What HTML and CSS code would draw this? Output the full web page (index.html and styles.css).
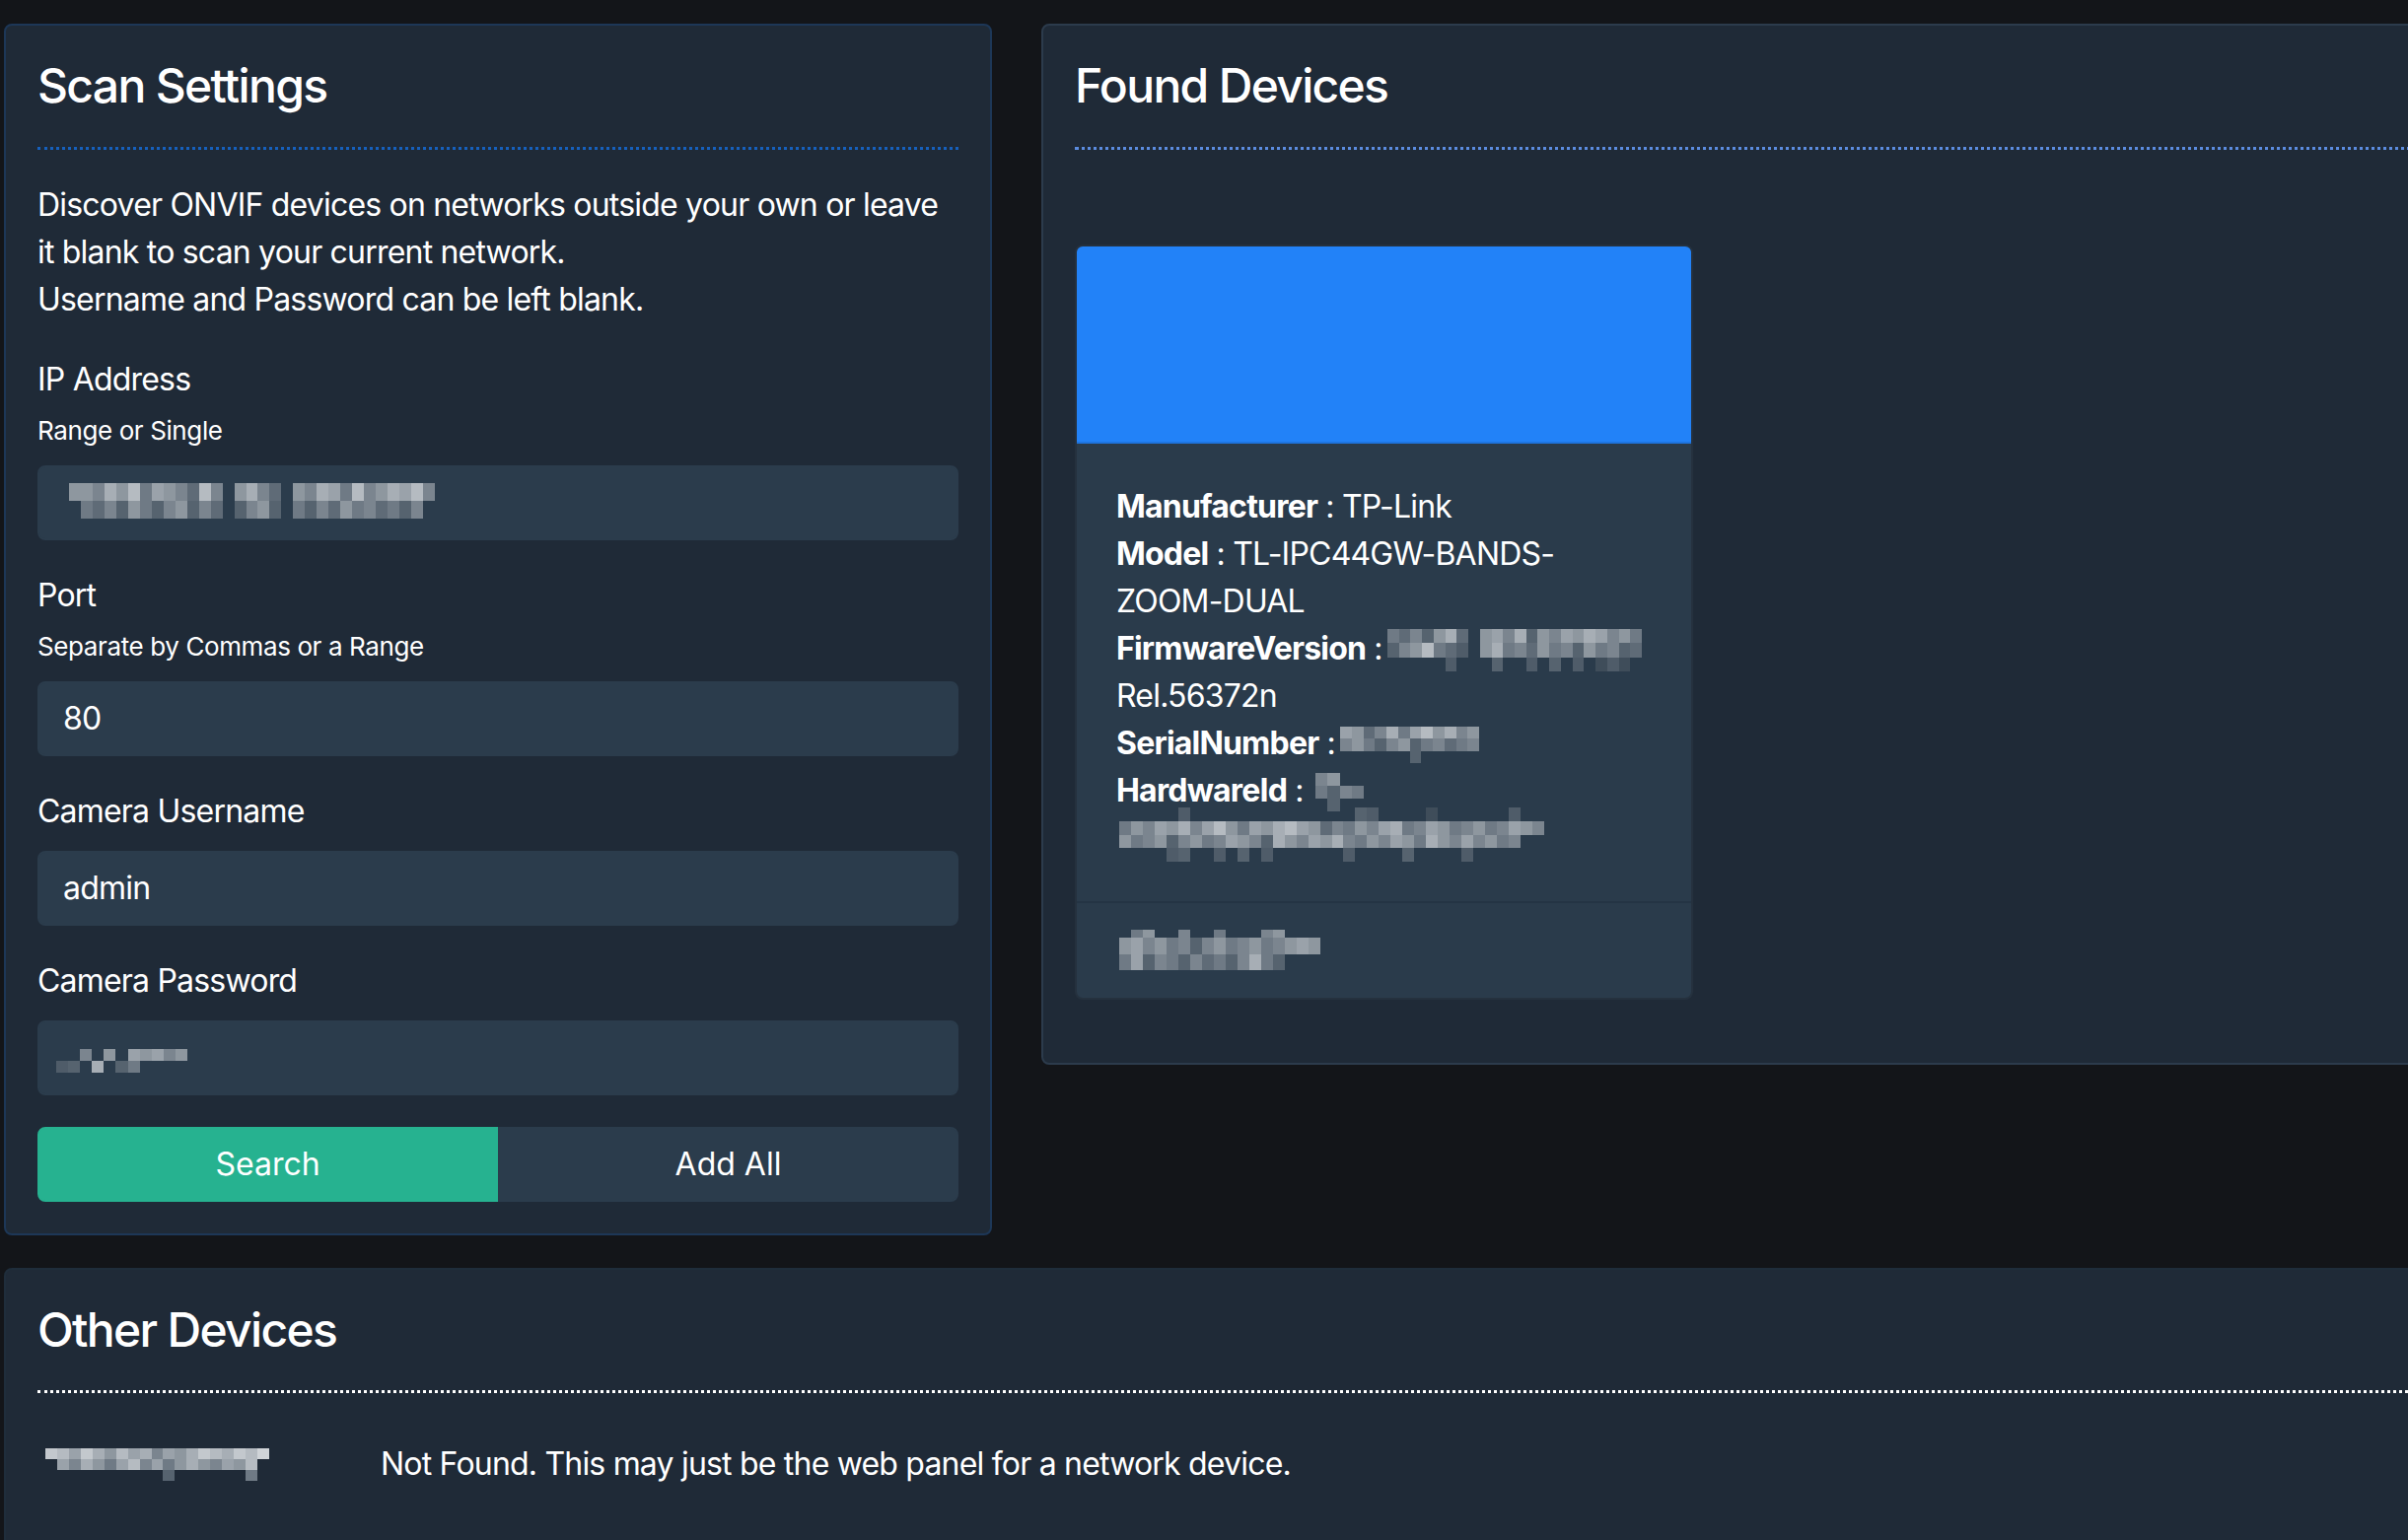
FILE: index.html
```html
<!DOCTYPE html>
<html lang="en">
<head>
<meta charset="utf-8">
<title>ONVIF Scanner</title>
<link rel="stylesheet" href="styles.css">
</head>
<body>
<div class="page">
  <div class="top-row">
    <section class="panel panel-scan">
      <h2 class="panel-title title-blue">Scan Settings</h2>
      <p class="intro">Discover ONVIF devices on networks outside your own or leave it blank to scan your current network.<br>Username and Password can be left blank.</p>

      <div class="field">
        <label class="label has-hint">IP Address</label>
        <div class="hint">Range or Single</div>
        <div class="input">
          <svg class="mosaic m-ip" viewBox="0 0 31 2" preserveAspectRatio="none" shape-rendering="crispEdges">
            <rect x="0" y="0" width="1" height="1" fill="#8e979f"/><rect x="1" y="0" width="1" height="1" fill="#8e979f"/><rect x="2" y="0" width="1" height="1" fill="#7b858f"/><rect x="3" y="0" width="1" height="1" fill="#a7aeb5"/><rect x="4" y="0" width="1" height="1" fill="#8e979f"/><rect x="5" y="0" width="1" height="1" fill="#b5bbc1"/><rect x="6" y="0" width="1" height="1" fill="#6f7a85"/><rect x="7" y="0" width="1" height="1" fill="#9aa2aa"/><rect x="8" y="0" width="1" height="1" fill="#8e979f"/><rect x="9" y="0" width="1" height="1" fill="#7b858f"/><rect x="10" y="0" width="1" height="1" fill="#5f6b77"/><rect x="11" y="0" width="1" height="1" fill="#b5bbc1"/><rect x="12" y="0" width="1" height="1" fill="#7b858f"/>
            <rect x="14" y="0" width="1" height="1" fill="#8e979f"/><rect x="15" y="0" width="1" height="1" fill="#a7aeb5"/><rect x="16" y="0" width="1" height="1" fill="#7b858f"/><rect x="17" y="0" width="1" height="1" fill="#5f6b77"/>
            <rect x="19" y="0" width="1" height="1" fill="#8e979f"/><rect x="20" y="0" width="1" height="1" fill="#7b858f"/><rect x="21" y="0" width="1" height="1" fill="#a7aeb5"/><rect x="22" y="0" width="1" height="1" fill="#9aa2aa"/><rect x="23" y="0" width="1" height="1" fill="#6f7a85"/><rect x="24" y="0" width="1" height="1" fill="#b5bbc1"/><rect x="25" y="0" width="1" height="1" fill="#7b858f"/><rect x="26" y="0" width="1" height="1" fill="#8e979f"/><rect x="27" y="0" width="1" height="1" fill="#a7aeb5"/><rect x="28" y="0" width="1" height="1" fill="#9aa2aa"/><rect x="29" y="0" width="1" height="1" fill="#b5bbc1"/><rect x="30" y="0" width="1" height="1" fill="#7b858f"/>
            <rect x="1" y="1" width="1" height="1" fill="#6f7a85"/><rect x="2" y="1" width="1" height="1" fill="#5f6b77"/><rect x="3" y="1" width="1" height="1" fill="#7b858f"/><rect x="4" y="1" width="1" height="1" fill="#56636f"/><rect x="5" y="1" width="1" height="1" fill="#8e979f"/><rect x="6" y="1" width="1" height="1" fill="#6f7a85"/><rect x="7" y="1" width="1" height="1" fill="#56636f"/><rect x="8" y="1" width="1" height="1" fill="#7b858f"/><rect x="9" y="1" width="1" height="1" fill="#8e979f"/><rect x="10" y="1" width="1" height="1" fill="#56636f"/><rect x="11" y="1" width="1" height="1" fill="#7b858f"/><rect x="12" y="1" width="1" height="1" fill="#5f6b77"/>
            <rect x="14" y="1" width="1" height="1" fill="#56636f"/><rect x="15" y="1" width="1" height="1" fill="#7b858f"/><rect x="16" y="1" width="1" height="1" fill="#8e979f"/><rect x="17" y="1" width="1" height="1" fill="#56636f"/>
            <rect x="19" y="1" width="1" height="1" fill="#6f7a85"/><rect x="20" y="1" width="1" height="1" fill="#56636f"/><rect x="21" y="1" width="1" height="1" fill="#7b858f"/><rect x="22" y="1" width="1" height="1" fill="#5f6b77"/><rect x="23" y="1" width="1" height="1" fill="#8e979f"/><rect x="24" y="1" width="1" height="1" fill="#6f7a85"/><rect x="25" y="1" width="1" height="1" fill="#7b858f"/><rect x="26" y="1" width="1" height="1" fill="#5f6b77"/><rect x="27" y="1" width="1" height="1" fill="#6f7a85"/><rect x="28" y="1" width="1" height="1" fill="#56636f"/><rect x="29" y="1" width="1" height="1" fill="#7b858f"/>
          </svg>
        </div>
      </div>

      <div class="field">
        <label class="label has-hint">Port</label>
        <div class="hint">Separate by Commas or a Range</div>
        <div class="input">80</div>
      </div>

      <div class="field">
        <label class="label">Camera Username</label>
        <div class="input">admin</div>
      </div>

      <div class="field">
        <label class="label">Camera Password</label>
        <div class="input">
          <svg class="mosaic m-pass" viewBox="0 0 11 2" preserveAspectRatio="none" shape-rendering="crispEdges">
            <rect x="2" y="0" width="1" height="1" fill="#7b858f"/><rect x="4" y="0" width="1" height="1" fill="#8e979f"/><rect x="6" y="0" width="1" height="1" fill="#9aa2aa"/><rect x="7" y="0" width="1" height="1" fill="#8e979f"/><rect x="8" y="0" width="1" height="1" fill="#9aa2aa"/><rect x="9" y="0" width="1" height="1" fill="#7b858f"/><rect x="10" y="0" width="1" height="1" fill="#8e979f"/>
            <rect x="0" y="1" width="1" height="1" fill="#4f5c69"/><rect x="1" y="1" width="1" height="1" fill="#56636f"/><rect x="3" y="1" width="1" height="1" fill="#a7aeb5"/><rect x="5" y="1" width="1" height="1" fill="#56636f"/><rect x="6" y="1" width="1" height="1" fill="#6f7a85"/>
          </svg>
        </div>
      </div>

      <div class="btn-group">
        <button class="btn btn-search">Search</button>
        <button class="btn btn-add">Add All</button>
      </div>
    </section>

    <section class="panel panel-found">
      <h2 class="panel-title title-lightblue">Found Devices</h2>
      <div class="cards">
        <div class="card">
          <div class="card-header"></div>
          <div class="card-body">
            <div class="info"><b>Manufacturer</b> : TP-Link</div>
            <div class="info"><b>Model</b> : TL-IPC44GW-BANDS-ZOOM-DUAL</div>
            <div class="info"><span class="keep"><b>FirmwareVersion</b> :<svg class="mosaic m-fw" viewBox="0 0 22 3" preserveAspectRatio="none" shape-rendering="crispEdges">
                <rect x="0" y="0" width="1" height="1" fill="#6f7a85"/><rect x="1" y="0" width="1" height="1" fill="#5f6b77"/><rect x="2" y="0" width="1" height="1" fill="#7b858f"/><rect x="3" y="0" width="1" height="1" fill="#56636f"/><rect x="4" y="0" width="1" height="1" fill="#8e979f"/><rect x="5" y="0" width="1" height="1" fill="#a7aeb5"/><rect x="6" y="0" width="1" height="1" fill="#5f6b77"/>
                <rect x="8" y="0" width="1" height="1" fill="#8e979f"/><rect x="9" y="0" width="1" height="1" fill="#9aa2aa"/><rect x="10" y="0" width="1" height="1" fill="#7b858f"/><rect x="11" y="0" width="1" height="1" fill="#a7aeb5"/><rect x="12" y="0" width="1" height="1" fill="#56636f"/><rect x="13" y="0" width="1" height="1" fill="#8e979f"/><rect x="14" y="0" width="1" height="1" fill="#7b858f"/><rect x="15" y="0" width="1" height="1" fill="#9aa2aa"/><rect x="16" y="0" width="1" height="1" fill="#8e979f"/><rect x="17" y="0" width="1" height="1" fill="#a7aeb5"/><rect x="18" y="0" width="1" height="1" fill="#9aa2aa"/><rect x="19" y="0" width="1" height="1" fill="#7b858f"/><rect x="20" y="0" width="1" height="1" fill="#8e979f"/><rect x="21" y="0" width="1" height="1" fill="#6f7a85"/>
                <rect x="0" y="1" width="1" height="1" fill="#56636f"/><rect x="1" y="1" width="1" height="1" fill="#7b858f"/><rect x="2" y="1" width="1" height="1" fill="#8e979f"/><rect x="3" y="1" width="1" height="1" fill="#b5bbc1"/><rect x="4" y="1" width="1" height="1" fill="#6f7a85"/><rect x="5" y="1" width="1" height="1" fill="#5f6b77"/><rect x="6" y="1" width="1" height="1" fill="#4f5c69"/>
                <rect x="8" y="1" width="1" height="1" fill="#8e979f"/><rect x="9" y="1" width="1" height="1" fill="#a7aeb5"/><rect x="10" y="1" width="1" height="1" fill="#6f7a85"/><rect x="11" y="1" width="1" height="1" fill="#7b858f"/><rect x="12" y="1" width="1" height="1" fill="#5f6b77"/><rect x="13" y="1" width="1" height="1" fill="#8e979f"/><rect x="14" y="1" width="1" height="1" fill="#6f7a85"/><rect x="15" y="1" width="1" height="1" fill="#7b858f"/><rect x="16" y="1" width="1" height="1" fill="#56636f"/><rect x="17" y="1" width="1" height="1" fill="#8e979f"/><rect x="18" y="1" width="1" height="1" fill="#6f7a85"/><rect x="19" y="1" width="1" height="1" fill="#7b858f"/><rect x="20" y="1" width="1" height="1" fill="#56636f"/><rect x="21" y="1" width="1" height="1" fill="#5f6b77"/>
                <rect x="5" y="2" width="1" height="1" fill="#4f5c69"/><rect x="9" y="2" width="1" height="1" fill="#56636f"/><rect x="12" y="2" width="1" height="1" fill="#4f5c69"/><rect x="14" y="2" width="1" height="1" fill="#56636f"/><rect x="16" y="2" width="1" height="1" fill="#4f5c69"/><rect x="18" y="2" width="1" height="1" fill="#3f4d5a"/><rect x="19" y="2" width="1" height="1" fill="#4f5c69"/><rect x="20" y="2" width="1" height="1" fill="#3f4d5a"/>
              </svg></span> Rel.56372n</div>
            <div class="info"><span class="keep"><b>SerialNumber</b> :<svg class="mosaic m-sn" viewBox="0 0 12 3" preserveAspectRatio="none" shape-rendering="crispEdges">
                <rect x="0" y="0" width="1" height="1" fill="#9aa2aa"/><rect x="1" y="0" width="1" height="1" fill="#8e979f"/><rect x="2" y="0" width="1" height="1" fill="#5f6b77"/><rect x="3" y="0" width="1" height="1" fill="#7b858f"/><rect x="4" y="0" width="1" height="1" fill="#a7aeb5"/><rect x="5" y="0" width="1" height="1" fill="#6f7a85"/><rect x="6" y="0" width="1" height="1" fill="#9aa2aa"/><rect x="7" y="0" width="1" height="1" fill="#b5bbc1"/><rect x="8" y="0" width="1" height="1" fill="#8e979f"/><rect x="9" y="0" width="1" height="1" fill="#a7aeb5"/><rect x="10" y="0" width="1" height="1" fill="#7b858f"/><rect x="11" y="0" width="1" height="1" fill="#8e979f"/>
                <rect x="0" y="1" width="1" height="1" fill="#7b858f"/><rect x="1" y="1" width="1" height="1" fill="#8e979f"/><rect x="2" y="1" width="1" height="1" fill="#6f7a85"/><rect x="3" y="1" width="1" height="1" fill="#56636f"/><rect x="4" y="1" width="1" height="1" fill="#7b858f"/><rect x="5" y="1" width="1" height="1" fill="#8e979f"/><rect x="6" y="1" width="1" height="1" fill="#56636f"/><rect x="7" y="1" width="1" height="1" fill="#6f7a85"/><rect x="8" y="1" width="1" height="1" fill="#7b858f"/><rect x="9" y="1" width="1" height="1" fill="#5f6b77"/><rect x="10" y="1" width="1" height="1" fill="#6f7a85"/><rect x="11" y="1" width="1" height="1" fill="#7b858f"/>
                <rect x="6" y="2" width="1" height="1" fill="#56636f"/>
              </svg></span></div>
            <div class="info"><b>HardwareId</b> : <svg class="mosaic m-hw" viewBox="0 0 4 3" preserveAspectRatio="none" shape-rendering="crispEdges">
                <rect x="0" y="0" width="1" height="1" fill="#7b858f"/><rect x="1" y="0" width="1" height="1" fill="#8e979f"/>
                <rect x="0" y="1" width="1" height="1" fill="#6f7a85"/><rect x="1" y="1" width="1" height="1" fill="#56636f"/><rect x="2" y="1" width="1" height="1" fill="#7b858f"/><rect x="3" y="1" width="1" height="1" fill="#6f7a85"/>
                <rect x="1" y="2" width="1" height="1" fill="#56636f"/>
              </svg><svg class="mosaic m-hwl" viewBox="0 0 36 4" preserveAspectRatio="none" shape-rendering="crispEdges">
                <rect x="5" y="0" width="1" height="1" fill="#4f5c69"/><rect x="20" y="0" width="1" height="1" fill="#56636f"/><rect x="21" y="0" width="1" height="1" fill="#4f5c69"/><rect x="26" y="0" width="1" height="1" fill="#3f4d5a"/><rect x="33" y="0" width="1" height="1" fill="#4f5c69"/>
                <rect x="0" y="1" width="1" height="1" fill="#6f7a85"/><rect x="1" y="1" width="1" height="1" fill="#8e979f"/><rect x="2" y="1" width="1" height="1" fill="#7b858f"/><rect x="3" y="1" width="1" height="1" fill="#9aa2aa"/><rect x="4" y="1" width="1" height="1" fill="#8e979f"/><rect x="5" y="1" width="1" height="1" fill="#a7aeb5"/><rect x="6" y="1" width="1" height="1" fill="#7b858f"/><rect x="7" y="1" width="1" height="1" fill="#9aa2aa"/><rect x="8" y="1" width="1" height="1" fill="#b5bbc1"/><rect x="9" y="1" width="1" height="1" fill="#8e979f"/><rect x="10" y="1" width="1" height="1" fill="#6f7a85"/><rect x="11" y="1" width="1" height="1" fill="#9aa2aa"/><rect x="12" y="1" width="1" height="1" fill="#8e979f"/><rect x="13" y="1" width="1" height="1" fill="#a7aeb5"/><rect x="14" y="1" width="1" height="1" fill="#b5bbc1"/><rect x="15" y="1" width="1" height="1" fill="#9aa2aa"/><rect x="16" y="1" width="1" height="1" fill="#8e979f"/><rect x="17" y="1" width="1" height="1" fill="#5f6b77"/><rect x="18" y="1" width="1" height="1" fill="#7b858f"/><rect x="19" y="1" width="1" height="1" fill="#6f7a85"/><rect x="20" y="1" width="1" height="1" fill="#8e979f"/><rect x="21" y="1" width="1" height="1" fill="#7b858f"/><rect x="22" y="1" width="1" height="1" fill="#9aa2aa"/><rect x="23" y="1" width="1" height="1" fill="#a7aeb5"/><rect x="24" y="1" width="1" height="1" fill="#6f7a85"/><rect x="25" y="1" width="1" height="1" fill="#7b858f"/><rect x="26" y="1" width="1" height="1" fill="#9aa2aa"/><rect x="27" y="1" width="1" height="1" fill="#8e979f"/><rect x="28" y="1" width="1" height="1" fill="#6f7a85"/><rect x="29" y="1" width="1" height="1" fill="#7b858f"/><rect x="30" y="1" width="1" height="1" fill="#8e979f"/><rect x="31" y="1" width="1" height="1" fill="#6f7a85"/><rect x="32" y="1" width="1" height="1" fill="#7b858f"/><rect x="33" y="1" width="1" height="1" fill="#9aa2aa"/><rect x="34" y="1" width="1" height="1" fill="#8e979f"/><rect x="35" y="1" width="1" height="1" fill="#7b858f"/>
                <rect x="0" y="2" width="1" height="1" fill="#8e979f"/><rect x="1" y="2" width="1" height="1" fill="#6f7a85"/><rect x="2" y="2" width="1" height="1" fill="#7b858f"/><rect x="3" y="2" width="1" height="1" fill="#8e979f"/><rect x="4" y="2" width="1" height="1" fill="#56636f"/><rect x="5" y="2" width="1" height="1" fill="#7b858f"/><rect x="6" y="2" width="1" height="1" fill="#8e979f"/><rect x="7" y="2" width="1" height="1" fill="#6f7a85"/><rect x="8" y="2" width="1" height="1" fill="#7b858f"/><rect x="9" y="2" width="1" height="1" fill="#9aa2aa"/><rect x="10" y="2" width="1" height="1" fill="#8e979f"/><rect x="11" y="2" width="1" height="1" fill="#7b858f"/><rect x="12" y="2" width="1" height="1" fill="#56636f"/><rect x="13" y="2" width="1" height="1" fill="#a7aeb5"/><rect x="14" y="2" width="1" height="1" fill="#8e979f"/><rect x="15" y="2" width="1" height="1" fill="#7b858f"/><rect x="16" y="2" width="1" height="1" fill="#9aa2aa"/><rect x="17" y="2" width="1" height="1" fill="#8e979f"/><rect x="18" y="2" width="1" height="1" fill="#a7aeb5"/><rect x="19" y="2" width="1" height="1" fill="#7b858f"/><rect x="20" y="2" width="1" height="1" fill="#6f7a85"/><rect x="21" y="2" width="1" height="1" fill="#8e979f"/><rect x="22" y="2" width="1" height="1" fill="#7b858f"/><rect x="23" y="2" width="1" height="1" fill="#9aa2aa"/><rect x="24" y="2" width="1" height="1" fill="#8e979f"/><rect x="25" y="2" width="1" height="1" fill="#6f7a85"/><rect x="26" y="2" width="1" height="1" fill="#a7aeb5"/><rect x="27" y="2" width="1" height="1" fill="#8e979f"/><rect x="28" y="2" width="1" height="1" fill="#7b858f"/><rect x="29" y="2" width="1" height="1" fill="#9aa2aa"/><rect x="30" y="2" width="1" height="1" fill="#7b858f"/><rect x="31" y="2" width="1" height="1" fill="#8e979f"/><rect x="32" y="2" width="1" height="1" fill="#6f7a85"/><rect x="33" y="2" width="1" height="1" fill="#7b858f"/>
                <rect x="4" y="3" width="1" height="1" fill="#4f5c69"/><rect x="5" y="3" width="1" height="1" fill="#56636f"/><rect x="8" y="3" width="1" height="1" fill="#4f5c69"/><rect x="10" y="3" width="1" height="1" fill="#56636f"/><rect x="12" y="3" width="1" height="1" fill="#4f5c69"/><rect x="19" y="3" width="1" height="1" fill="#4f5c69"/><rect x="24" y="3" width="1" height="1" fill="#56636f"/><rect x="29" y="3" width="1" height="1" fill="#4f5c69"/>
              </svg></div>
          </div>
          <div class="card-footer">
            <svg class="mosaic m-foot" viewBox="0 0 17 5" preserveAspectRatio="none" shape-rendering="crispEdges">
              <rect x="1" y="0" width="1" height="1" fill="#6f7a85"/><rect x="2" y="0" width="1" height="1" fill="#8e979f"/><rect x="5" y="0" width="1" height="1" fill="#7b858f"/><rect x="8" y="0" width="1" height="1" fill="#6f7a85"/><rect x="12" y="0" width="1" height="1" fill="#7b858f"/><rect x="13" y="0" width="1" height="1" fill="#8e979f"/>
              <rect x="0" y="1" width="1" height="2" fill="#8e979f"/><rect x="1" y="1" width="1" height="2" fill="#9aa2aa"/><rect x="2" y="1" width="1" height="2" fill="#7b858f"/><rect x="3" y="1" width="1" height="2" fill="#8e979f"/><rect x="4" y="1" width="1" height="2" fill="#6f7a85"/><rect x="5" y="1" width="1" height="2" fill="#7b858f"/><rect x="6" y="1" width="1" height="2" fill="#56636f"/><rect x="7" y="1" width="1" height="2" fill="#7b858f"/><rect x="8" y="1" width="1" height="2" fill="#8e979f"/><rect x="9" y="1" width="1" height="2" fill="#6f7a85"/><rect x="10" y="1" width="1" height="2" fill="#7b858f"/><rect x="11" y="1" width="1" height="2" fill="#8e979f"/><rect x="12" y="1" width="1" height="2" fill="#6f7a85"/><rect x="13" y="1" width="1" height="2" fill="#7b858f"/><rect x="14" y="1" width="1" height="2" fill="#8e979f"/><rect x="15" y="1" width="1" height="2" fill="#9aa2aa"/><rect x="16" y="1" width="1" height="2" fill="#8e979f"/>
              <rect x="0" y="3" width="1" height="2" fill="#6f7a85"/><rect x="1" y="3" width="1" height="2" fill="#9aa2aa"/><rect x="2" y="3" width="1" height="2" fill="#56636f"/><rect x="3" y="3" width="1" height="2" fill="#7b858f"/><rect x="4" y="3" width="1" height="2" fill="#6f7a85"/><rect x="5" y="3" width="1" height="2" fill="#56636f"/><rect x="6" y="3" width="1" height="2" fill="#7b858f"/><rect x="7" y="3" width="1" height="2" fill="#5f6b77"/><rect x="8" y="3" width="1" height="2" fill="#6f7a85"/><rect x="9" y="3" width="1" height="2" fill="#56636f"/><rect x="10" y="3" width="1" height="2" fill="#7b858f"/><rect x="11" y="3" width="1" height="2" fill="#a7aeb5"/><rect x="12" y="3" width="1" height="2" fill="#6f7a85"/><rect x="13" y="3" width="1" height="2" fill="#56636f"/>
            </svg>
          </div>
        </div>
      </div>
    </section>
  </div>

  <section class="panel panel-other">
    <h2 class="panel-title title-white">Other Devices</h2>
    <div class="other-table">
      <div class="other-cell">
        <svg class="mosaic m-other" viewBox="0 0 19 3" preserveAspectRatio="none" shape-rendering="crispEdges">
          <rect x="0" y="0" width="1" height="1" fill="#c3c8cd"/><rect x="1" y="0" width="1" height="1" fill="#b5bbc1"/><rect x="2" y="0" width="1" height="1" fill="#9aa2aa"/><rect x="3" y="0" width="1" height="1" fill="#c3c8cd"/><rect x="4" y="0" width="1" height="1" fill="#a7aeb5"/><rect x="5" y="0" width="1" height="1" fill="#8e979f"/><rect x="6" y="0" width="1" height="1" fill="#b5bbc1"/><rect x="7" y="0" width="1" height="1" fill="#9aa2aa"/><rect x="8" y="0" width="1" height="1" fill="#a7aeb5"/><rect x="9" y="0" width="1" height="1" fill="#7b858f"/><rect x="10" y="0" width="1" height="1" fill="#9aa2aa"/><rect x="11" y="0" width="1" height="1" fill="#8e979f"/><rect x="12" y="0" width="1" height="1" fill="#a7aeb5"/><rect x="13" y="0" width="1" height="1" fill="#c3c8cd"/><rect x="14" y="0" width="1" height="1" fill="#b5bbc1"/><rect x="15" y="0" width="1" height="1" fill="#a7aeb5"/><rect x="16" y="0" width="1" height="1" fill="#c3c8cd"/><rect x="17" y="0" width="1" height="1" fill="#b5bbc1"/><rect x="18" y="0" width="1" height="1" fill="#d0d4d8"/>
          <rect x="1" y="1" width="1" height="1" fill="#9aa2aa"/><rect x="2" y="1" width="1" height="1" fill="#7b858f"/><rect x="3" y="1" width="1" height="1" fill="#a7aeb5"/><rect x="4" y="1" width="1" height="1" fill="#8e979f"/><rect x="5" y="1" width="1" height="1" fill="#6f7a85"/><rect x="6" y="1" width="1" height="1" fill="#9aa2aa"/><rect x="7" y="1" width="1" height="1" fill="#b5bbc1"/><rect x="8" y="1" width="1" height="1" fill="#7b858f"/><rect x="9" y="1" width="1" height="1" fill="#9aa2aa"/><rect x="10" y="1" width="1" height="1" fill="#6f7a85"/><rect x="11" y="1" width="1" height="1" fill="#8e979f"/><rect x="12" y="1" width="1" height="1" fill="#a7aeb5"/><rect x="13" y="1" width="1" height="1" fill="#8e979f"/><rect x="14" y="1" width="1" height="1" fill="#7b858f"/><rect x="15" y="1" width="1" height="1" fill="#9aa2aa"/><rect x="16" y="1" width="1" height="1" fill="#8e979f"/><rect x="17" y="1" width="1" height="1" fill="#b5bbc1"/>
          <rect x="10" y="2" width="1" height="1" fill="#56636f"/><rect x="17" y="2" width="1" height="1" fill="#6f7a85"/>
        </svg>
      </div>
      <div class="other-cell">Not Found. This may just be the web panel for a network device.</div>
    </div>
  </section>
</div>
</body>
</html>
```

FILE: styles.css
```css
* {
  box-sizing: border-box;
}

html,
body {
  margin: 0;
  padding: 0;
}

body {
  background: #131519;
  color: #ffffff;
  font-family: Inter, "Noto Sans", "Liberation Sans", sans-serif;
  font-size: 32px;
  line-height: 1.5;
  letter-spacing: -0.025em;
  overflow: hidden;
}

.page {
  width: 2560px;
  padding: 24px 0 0 4px;
}

.top-row {
  display: flex;
  align-items: flex-start;
  gap: 50px;
}

.panel {
  background: #1f2a37;
  border: 2px solid #22344a;
  border-radius: 8px;
  padding: 32px;
}

.panel-scan {
  width: 1002px;
  flex: none;
  border-color: #1d3757;
}

.panel-found {
  width: 1460px;
  flex: none;
  border-color: #2c3b4c;
  padding-bottom: 32px;
}

.panel-other {
  margin-top: 33px;
  width: 2520px;
  min-height: 420px;
  border-color: #1f2d3b;
}

.panel-title {
  margin: 0 0 32px;
  font-size: 48px;
  font-weight: 500;
  line-height: 1.2;
  letter-spacing: -0.035em;
  padding-bottom: 33px;
  border-bottom: 3px dotted;
}

.title-blue {
  border-bottom-color: #1660bd;
}

.title-lightblue {
  border-bottom-color: #5b8ce0;
}

.title-white {
  border-bottom-color: #ffffff;
}

.intro {
  margin: 0 0 33px;
}

.field {
  margin-bottom: 32px;
}

.label {
  display: block;
  margin-bottom: 16px;
}

.label.has-hint {
  margin-bottom: 8px;
}

.hint {
  font-size: 26px;
  line-height: 1.5;
  letter-spacing: -0.015em;
  margin-bottom: 16px;
}

.input {
  display: flex;
  align-items: center;
  height: 76px;
  padding: 12px 24px;
  background: #2b3c4c;
  border: 2px solid #2b3c4c;
  border-radius: 8px;
}

.mosaic {
  display: inline-block;
  flex: none;
}

.m-ip {
  width: 371px;
  height: 36px;
  margin-left: 6px;
  margin-top: -4px;
}

.m-pass {
  width: 133px;
  height: 24px;
  margin-left: -7px;
  margin-top: 6px;
}

.btn-group {
  display: flex;
}

.btn {
  flex: 1;
  height: 76px;
  padding: 12px 24px;
  font: inherit;
  color: #ffffff;
  border: 2px solid;
  cursor: pointer;
}

.btn-search {
  background: #26b290;
  border-color: #26b290;
  border-radius: 8px 0 0 8px;
}

.btn-add {
  background: #2b3c4c;
  border-color: #2b3c4c;
  border-radius: 0 8px 8px 0;
}

.cards {
  margin-top: 96px;
  display: flex;
}

.card {
  width: 627px;
  background: #2a3b4b;
  border: 2px solid #25313e;
  border-radius: 8px;
  overflow: hidden;
  margin-bottom: 32px;
}

.card-header {
  height: 200px;
  background: #2282f8;
  border-bottom: 2px solid #1e74df;
}

.card-body {
  padding: 40px;
}

.info b {
  font-weight: 700;
}

.keep {
  white-space: nowrap;
}

.m-fw {
  width: 258px;
  height: 43px;
  vertical-align: middle;
  margin-left: 5px;
}

.m-sn {
  width: 141px;
  height: 37px;
  vertical-align: middle;
  margin-left: 5px;
}

.m-hw {
  width: 49px;
  height: 39px;
  vertical-align: middle;
  margin-left: 4px;
}

.m-hwl {
  display: block;
  width: 431px;
  height: 55px;
  margin-top: -7px;
  margin-left: 3px;
}

.card-footer {
  padding: 24px 40px;
  border-top: 2px solid #243444;
  height: 98px;
  display: flex;
  align-items: center;
}

.m-foot {
  width: 204px;
  height: 41px;
  margin-left: 3px;
}

.other-table {
  display: grid;
  grid-template-columns: 340px 1fr;
  margin-top: 40px;
}

.other-cell {
  padding: 8px;
  display: flex;
  align-items: center;
}

.m-other {
  width: 227px;
  height: 33px;
}
```
